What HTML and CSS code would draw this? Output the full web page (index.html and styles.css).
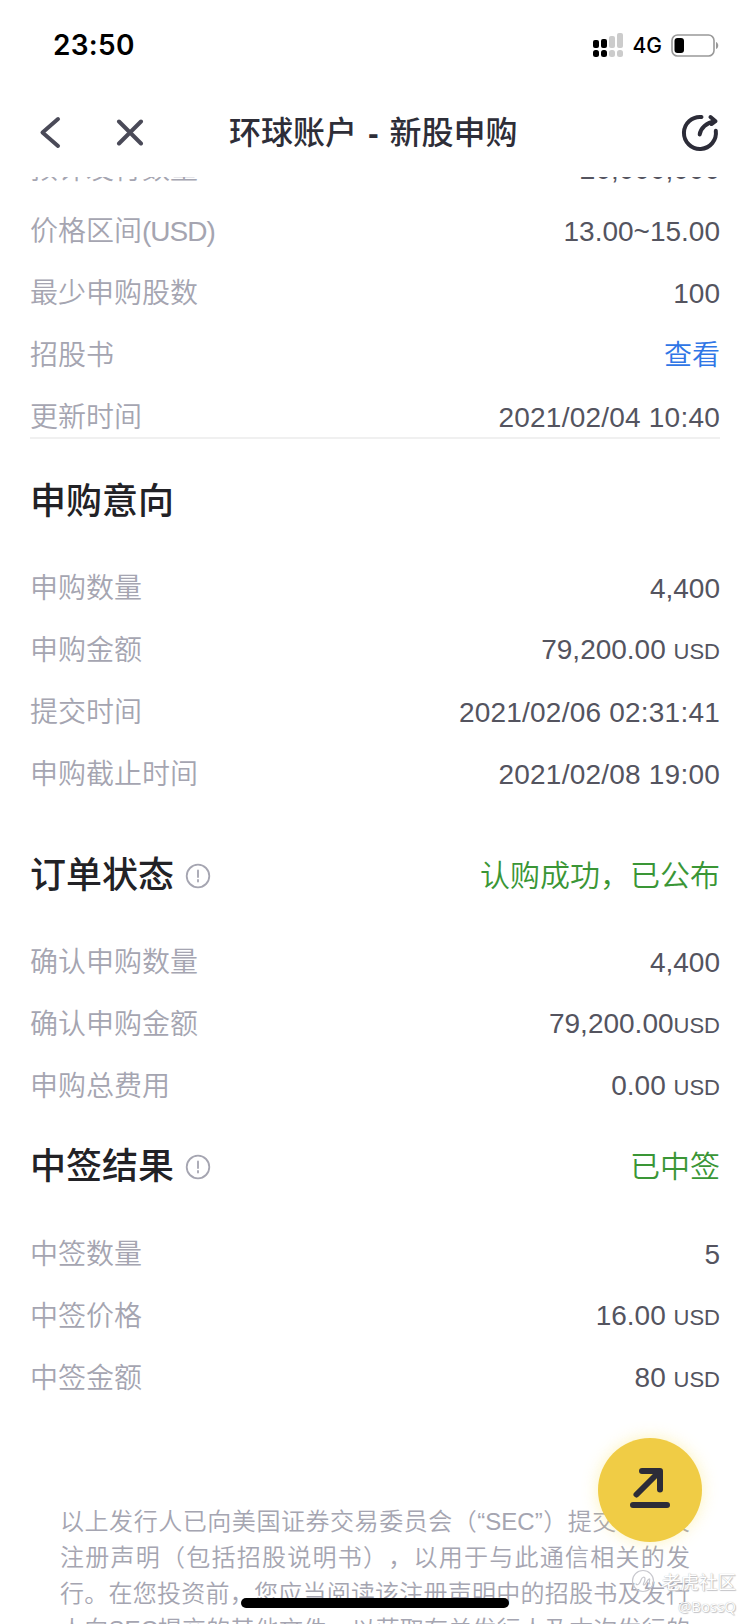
FILE: index.html
```html
<!DOCTYPE html>
<html lang="zh-CN">
<head>
  <meta charset="UTF-8">
  <title>环球账户 - 新股申购</title>
  <meta name="viewport" content="width=device-width, initial-scale=1.0">
  <link rel="stylesheet" href="styles.css">
</head>
<body>
  <div class="status-bar">
    <span class="clock">23:50</span>
    <div class="status-icons">
      <svg class="signal" width="30" height="24" viewBox="0 0 30 24">
        <g fill="#000">
          <rect x="0" y="7" width="6" height="8" rx="2"/>
          <rect x="8" y="6" width="6" height="9" rx="2"/>
          <rect x="0" y="17" width="6" height="7" rx="2.5"/>
          <rect x="8" y="17" width="6" height="7" rx="2.5"/>
        </g>
        <g fill="#ccc">
          <rect x="16" y="3" width="6" height="12" rx="2"/>
          <rect x="24" y="0" width="6" height="15" rx="2"/>
          <rect x="16" y="17" width="6" height="7" rx="2.5"/>
          <rect x="24" y="17" width="6" height="7" rx="2.5"/>
        </g>
      </svg>
      <span class="network">4G</span>
      <svg class="battery" width="48" height="23" viewBox="0 0 48 23">
        <rect x="1" y="1" width="42" height="21" rx="5.5" fill="none" stroke="#999" stroke-width="1.6"/>
        <rect x="3.5" y="4" width="9.5" height="15" rx="3" fill="#000"/>
        <path d="M45 8c3 1 3 6 0 7z" fill="#999"/>
      </svg>
    </div>
  </div>

  <div class="nav-bar">
    <svg class="icon-back" width="24" height="34" viewBox="0 0 24 34">
      <path d="M20 3L4.5 16.500L20 30"/>
    </svg>
    <svg class="icon-close" width="28" height="28" viewBox="0 0 28 28">
      <path d="M3 2.500l22 22M25 2.500L3 24.500"/>
    </svg>
    <h1>环球账户 <b>-</b> 新股申购</h1>
    <svg class="icon-refresh" width="40" height="40" viewBox="0 0 40 40">
      <path d="M21.500 4A16 16 0 1 0 35.800 17.800"/>
      <path d="M19.700 21.500C20.500 15.500 26.500 9.300 35 8.300M30.500 4L35.500 8.200L31.500 11"/>
    </svg>
  </div>

  <div class="content">
    <div class="rows issue">
      <div class="row"><span class="label">预计发行数量</span><span class="value">20,000,000</span></div>
      <div class="row"><span class="label">价格区间<span class="unit">(USD)</span></span><span class="value">13.00~15.00</span></div>
      <div class="row"><span class="label">最少申购股数</span><span class="value">100</span></div>
      <div class="row"><span class="label">招股书</span><a class="value link">查看</a></div>
      <div class="row"><span class="label">更新时间</span><span class="value date">2021/02/04 10:40</span></div>
    </div>

    <div class="section-title intent"><h2>申购意向</h2></div>
    <div class="rows">
      <div class="row"><span class="label">申购数量</span><span class="value">4,400</span></div>
      <div class="row"><span class="label">申购金额</span><span class="value">79,200.00 <small>USD</small></span></div>
      <div class="row"><span class="label">提交时间</span><span class="value date">2021/02/06 02:31:41</span></div>
      <div class="row"><span class="label">申购截止时间</span><span class="value date">2021/02/08 19:00</span></div>
    </div>

    <div class="section-title order">
      <h2>订单状态</h2>
      <svg class="icon-info" width="26" height="26" viewBox="0 0 26 26">
        <circle cx="13" cy="13" r="11.3"/>
        <path d="M13 7.500v6.500M13 17v1.500"/>
      </svg>
      <span class="state">认购成功，已公布</span>
    </div>
    <div class="rows">
      <div class="row"><span class="label">确认申购数量</span><span class="value">4,400</span></div>
      <div class="row"><span class="label">确认申购金额</span><span class="value">79,200.00<small>USD</small></span></div>
      <div class="row"><span class="label">申购总费用</span><span class="value">0.00 <small>USD</small></span></div>
    </div>

    <div class="section-title result">
      <h2>中签结果</h2>
      <svg class="icon-info" width="26" height="26" viewBox="0 0 26 26">
        <circle cx="13" cy="13" r="11.3"/>
        <path d="M13 7.500v6.500M13 17v1.500"/>
      </svg>
      <span class="state">已中签</span>
    </div>
    <div class="rows">
      <div class="row"><span class="label">中签数量</span><span class="value">5</span></div>
      <div class="row"><span class="label">中签价格</span><span class="value">16.00 <small>USD</small></span></div>
      <div class="row"><span class="label">中签金额</span><span class="value">80 <small>USD</small></span></div>
    </div>

    <div class="disclaimer">
      <p>以上发行人已向美国证券交易委员会（“SEC”）提交了相关</p>
      <p>注册声明（包括招股说明书），以用于与此通信相关的发</p>
      <p>行。在您投资前，您应当阅读该注册声明中的招股书及发行</p>
      <p>人向SEC提交的其他文件，以获取有关发行人及本次发行的</p>
    </div>
  </div>

  <!-- floating layers -->
  <div class="fab">
    <svg width="48" height="48" viewBox="0 0 48 48">
      <path d="M10.500 28.500L33.500 5.500M16 5H34V23.500M7 39H41"/>
    </svg>
  </div>

  <div class="home-indicator"></div>

  <div class="watermark">
    <div class="brand">
      <svg width="24" height="24" viewBox="0 0 24 24">
        <circle cx="12" cy="12" r="10.5"/>
        <path d="M5 15c2 2 4-1 5-4s4-4 4-1-3 6-1 6 3-5 5-6-1 5 1 5"/>
      </svg>
      <span>老虎社区</span>
    </div>
    <div class="user">@BossQ</div>
  </div>
</body>
</html>
```
FILE: styles.css
```css
* {
  box-sizing: border-box;
}
body {
  position: relative;
  margin: 0;
  width: 750px;
  height: 1624px;
  overflow: hidden;
  background: #fff;
  font-family: "Liberation Sans", "Noto Sans CJK SC", sans-serif;
  text-spacing-trim: space-all;
  color: #54545f;
}
h1, h2, p {
  margin: 0;
}
svg {
  display: block;
  flex: none;
  fill: none;
  stroke-linecap: round;
  stroke-linejoin: round;
}

/* status bar */
.status-bar {
  display: flex;
  justify-content: space-between;
  align-items: center;
  height: 88px;
  padding: 2px 31px 0 53px;
  font-family: Inter, sans-serif;
  color: #000;
}
.clock {
  font-size: 28px;
  font-weight: 600;
  letter-spacing: 0.3px;
}
.status-icons {
  display: flex;
  align-items: center;
}
.network {
  margin: 0 9px 0 10px;
  font-size: 21px;
  font-weight: 500;
}

/* nav bar */
.nav-bar {
  display: flex;
  align-items: center;
  height: 89px;
  padding: 0 30px 0 38px;
}
.icon-back, .icon-close {
  stroke: #4a4a58;
  stroke-width: 4;
}
.icon-close {
  margin-left: 54px;
}
.nav-bar h1 {
  flex: 1;
  margin-left: 85px;
  font-size: 32px;
  font-weight: 500;
  line-height: 48px;
  word-spacing: 2px;
  color: #2e2e38;
}
.icon-refresh {
  stroke: #2c2c38;
  stroke-width: 4;
}

/* scrolled content */
.content {
  height: 1447px;
  overflow: hidden;
  padding: 0 30px;
}
.row {
  display: flex;
  justify-content: space-between;
  align-items: center;
  height: 62px;
  font-size: 28px;
  line-height: 40px;
}
.issue {
  margin-top: -38px;
  height: 300px;
  border-bottom: 2px solid #f0f0f0;
}
.label {
  font-weight: 350;
  color: #a5a5b1;
}
.unit {
  letter-spacing: -1px;
}
.value small {
  font-size: 22px;
}
.date {
  letter-spacing: 0.22px;
}
.link {
  color: #2f76e6;
  font-weight: 350;
}
.section-title {
  display: flex;
  align-items: center;
  height: 60px;
}
.section-title h2 {
  font-size: 36px;
  font-weight: 500;
  line-height: 54px;
  color: #222226;
}
.intent {
  margin: 33px 0 26px;
}
.order {
  margin: 40px 0 26px;
}
.result {
  margin: 19px 0 27px;
}
.icon-info {
  margin-left: 11px;
  stroke: #a5a5b1;
  stroke-width: 1.8;
}
.state {
  margin-left: auto;
  padding-bottom: 7px;
  font-size: 30px;
  font-weight: 350;
  color: #3a9636;
}
.disclaimer {
  padding: 94px 30px 0;
  font-size: 24px;
  font-weight: 350;
  line-height: 36px;
  color: #a5a5b1;
}
.disclaimer p {
  height: 36px;
  white-space: nowrap;
  text-align: justify;
  text-align-last: justify;
}

/* floating layers */
.fab {
  position: absolute;
  left: 598px;
  top: 1438px;
  width: 104px;
  height: 104px;
  display: flex;
  align-items: center;
  justify-content: center;
  border-radius: 50%;
  background: #f0cc45;
  box-shadow: 0 0 16px rgba(250, 225, 90, 0.4);
}
.fab svg {
  stroke: #2c2c38;
  stroke-width: 6;
}
.home-indicator {
  position: absolute;
  left: 241px;
  top: 1598px;
  width: 268px;
  height: 10px;
  border-radius: 5px;
  background: #000;
}
.watermark {
  position: absolute;
  right: 14px;
  top: 1567px;
  color: #fff;
  text-shadow: 0 0 1px #aaa, 1px 1px 1px #c4c4c8;
}
.brand {
  display: flex;
  align-items: center;
  justify-content: flex-end;
  gap: 7px;
  height: 27px;
  font-size: 18.5px;
}
.brand svg {
  stroke: #c8c8ce;
  stroke-width: 1.2;
}
.user {
  font-family: "Open Sans", sans-serif;
  font-size: 15px;
  line-height: 24px;
  text-align: right;
}
```
